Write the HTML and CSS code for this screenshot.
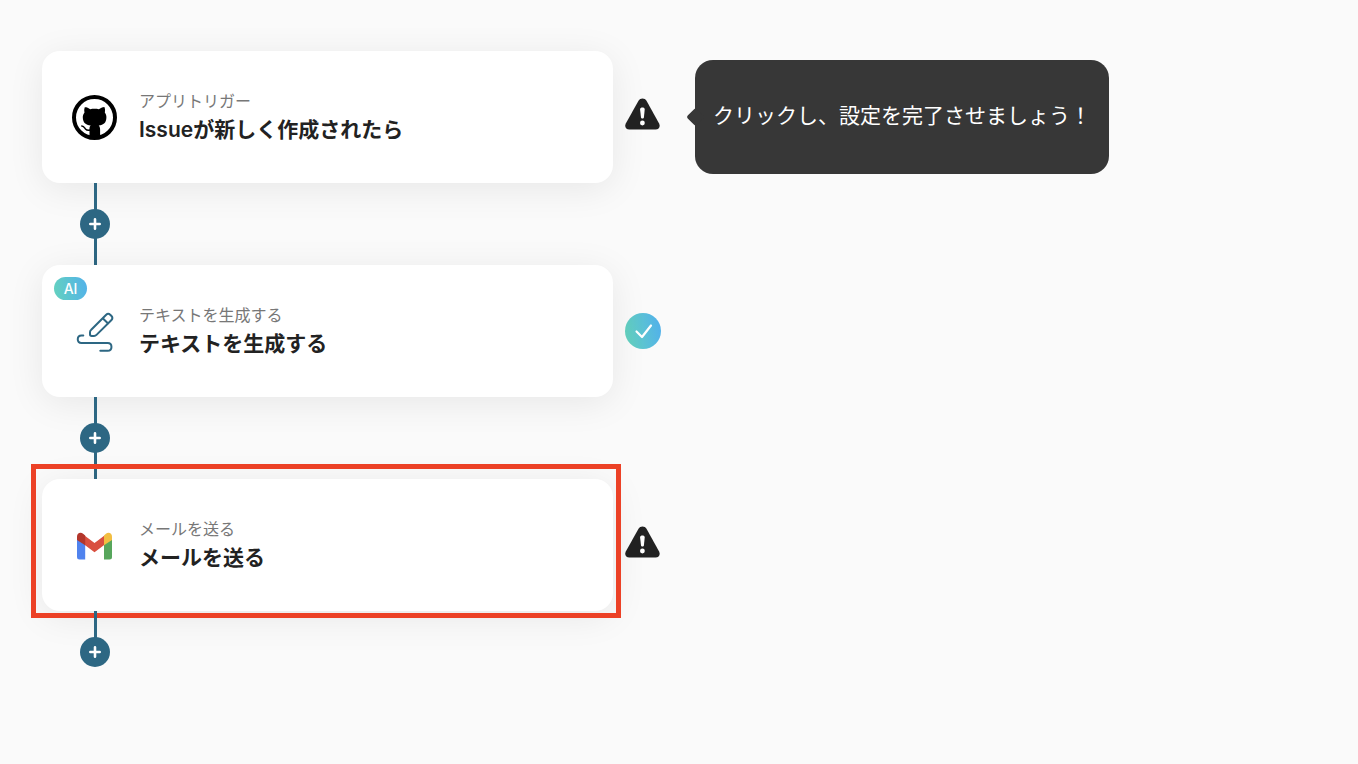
FILE: index.html
```html
<!DOCTYPE html>
<html lang="ja">
<head>
<meta charset="utf-8">
<meta name="viewport" content="width=device-width, initial-scale=1">
<title>フロー</title>
<link rel="stylesheet" href="styles.css">
</head>
<body>
<svg class="defs" aria-hidden="true">
  <defs>
    <linearGradient id="done" x1="0" x2="1" y1="0.6" y2="0.4"><stop offset="0" stop-color="#64d2be"/><stop offset="1" stop-color="#52b1ea"/></linearGradient>
    <symbol id="warning" viewBox="0 0 36 32">
      <path d="M17.500 0.500c1.700 0 3 .7 4 2.300L34.100 25.500c1.500 3.200-.1 6-3.600 6H4.300c-3.400 0-5-2.800-3.500-6L13.500 2.800c1-1.600 2.300-2.300 4-2.300z" fill="#222"/>
      <path d="M15.100 11.500c0-1.400 1-2 2.300-2s2.300.6 2.300 2l-.8 8c-.2 1.400-2.700 1.400-2.900 0z" fill="#fff"/>
      <circle cx="17.400" cy="25" r="2.400" fill="#fff"/>
    </symbol>
    <symbol id="plus" viewBox="0 0 14 14"><path d="M7 1.500v11M1.500 7h11" stroke="#fff" stroke-width="3" stroke-linecap="round"/></symbol>
  </defs>
</svg>
<main class="flow">
  <section class="step">
    <article class="card">
      <svg class="app-icon" viewBox="0 0 45 45" role="img" aria-label="GitHub">
        <circle cx="22.500" cy="22.500" r="20.500" fill="#fff" stroke="#000" stroke-width="4"/>
        <path d="M12.700 12c2.200.1 4 1.100 5.500 2.200 2.700-.6 6-.6 8.700 0 1.600-1.100 3.400-2.100 5.500-2.200.8 1.900.8 3.800.4 5.400 1.200 1.500 1.700 3.200 1.600 5.200-.1 5.200-2.700 7.500-7.700 8 1 .9 1.400 2.200 1.400 3.900v8.500H17.500v-10c.2-1.100.5-1.700 1.200-2.400-5-.5-7.800-2.900-7.900-8-.1-2 .5-3.700 1.700-5.200-.4-1.700-.4-3.500.4-5.400z"/>
        <path d="M9.800 31c2.200.1 2.600 1.600 3.700 3 1.100 1.300 2.700 1.500 4.600 1.100" fill="none" stroke="#000" stroke-width="1.500" stroke-linecap="round"/>
      </svg>
      <div class="copy"><p class="kind">アプリトリガー</p><h2 class="name">Issueが新しく作成されたら</h2></div>
    </article>
    <svg class="state warning" role="img" aria-label="要設定"><use href="#warning"/></svg>
    <p class="hint" role="status">クリックし、設定を完了させましょう！</p>
  </section>
  <div class="connector"><button class="add" type="button" aria-label="ステップを追加"><svg><use href="#plus"/></svg></button></div>
  <section class="step">
    <article class="card">
      <span class="badge">AI</span>
      <svg class="app-icon" viewBox="0 0 45 45" fill="none" stroke="#2d6783" stroke-width="2" stroke-linecap="round" stroke-linejoin="round" aria-hidden="true">
        <path d="M19.200 20.700 34.200 5.700c1.200-1.200 2.800-1.200 4 0l1.300 1.300c1.200 1.200 1.200 2.800 0 4L24.500 25.900q-1 1-2.500 1h-2.300q-1.700 0-1.700-1.700v-2q0-1.500 1.200-2.500zM30.700 9.200l5.400 5.300"/>
        <path d="M11.300 26.600H9.500c-5 0-5 7.500 0 7.500h26.200c5 0 5 7.600 0 7.600H28.300"/>
      </svg>
      <div class="copy"><p class="kind">テキストを生成する</p><h2 class="name">テキストを生成する</h2></div>
    </article>
    <svg class="state done" viewBox="0 0 36 36" role="img" aria-label="完了"><circle cx="18" cy="18" r="18" fill="url(#done)"/><path d="M11.500 18.500 17 24l9-11.500" fill="none" stroke="#fff" stroke-width="2.200" stroke-linecap="round" stroke-linejoin="round"/></svg>
  </section>
  <div class="connector"><button class="add" type="button" aria-label="ステップを追加"><svg><use href="#plus"/></svg></button></div>
  <section class="step">
    <article class="card selected">
      <svg class="app-icon" viewBox="0 0 45 45" role="img" aria-label="Gmail">
        <path d="M5 14h8.200v22.500H7.500Q5 36.500 5 34z" fill="#5083ee"/>
        <path d="M32 14h8v20q0 2.500-2.500 2.500H32z" fill="#57a65c"/>
        <path d="M12.500 12.400 22.500 20 32.500 12.400v9.300l-10 7.500-10-7.500z" fill="#d95040"/>
        <path d="M5 17v-3.300C5 9.800 8.800 8.800 11.400 11l1.800 1.400v9.800z" fill="#b3362b"/>
        <path d="M40 17v-3.300c0-3.900-3.800-4.900-6.400-2.700L32 12.400v9.800z" fill="#f2be42"/>
      </svg>
      <div class="copy"><p class="kind">メールを送る</p><h2 class="name">メールを送る</h2></div>
    </article>
    <svg class="state warning" role="img" aria-label="要設定"><use href="#warning"/></svg>
  </section>
  <div class="connector last"><button class="add" type="button" aria-label="ステップを追加"><svg><use href="#plus"/></svg></button></div>
</main>
</body>
</html>
```

FILE: styles.css
```css
* { box-sizing: border-box; }
body {
  margin: 0;
  background: #fafafa;
  color: #222;
  font-family: Inter, "Noto Sans CJK JP", sans-serif;
}
h2, p { margin: 0; }
.defs { position: absolute; width: 0; height: 0; }
.flow { padding: 51px 42px; }
.step {
  display: grid;
  grid-template-columns: minmax(300px, 571px) 36px auto;
  justify-content: start;
  align-items: center;
  column-gap: 12px;
}
.card {
  position: relative;
  display: flex;
  align-items: center;
  gap: 22px;
  min-height: 132px;
  padding: 30px;
  border-radius: 18px;
  background: #fff;
  box-shadow: 0 6px 36px rgba(0, 0, 0, 0.08);
}
.app-icon { flex: none; width: 45px; height: 45px; }
.copy { min-width: 0; padding-bottom: 3px; }
.kind { color: #777; font-size: 16px; line-height: 28px; }
.name { font-size: 21px; font-weight: 600; line-height: 30px; }
.badge {
  position: absolute;
  top: 12px;
  left: 12px;
  width: 33px;
  border-radius: 12px;
  background: linear-gradient(80deg, #64d2be, #52b1ea);
  color: #fff;
  font-size: 14px;
  font-weight: 500;
  line-height: 23px;
  text-align: center;
}
.selected::after {
  content: "";
  position: absolute;
  inset: -15px -8px -7px -11px;
  border: 5px solid #ec4126;
  pointer-events: none;
}
.state { width: 36px; height: 36px; }
.warning { height: 32px; margin-bottom: 6px; }
.hint {
  position: relative;
  margin-left: 22px;
  padding: 41px 18px 43px;
  border-radius: 18px;
  background: #373737;
  color: #fff;
  font-size: 21px;
  line-height: 30px;
}
.hint::before {
  content: "";
  position: absolute;
  top: 50%;
  left: -6px;
  width: 13px;
  height: 13px;
  border-radius: 2px;
  background: #373737;
  transform: translateY(-50%) rotate(45deg);
}
.connector {
  position: relative;
  display: flex;
  justify-content: center;
  width: 30px;
  height: 82px;
  margin-left: 38px;
  padding-top: 26px;
  background: linear-gradient(#2d6783, #2d6783) 14px 0 / 3px 100% no-repeat;
}
.last { height: 56px; background-size: 3px 40px; }
.add {
  display: grid;
  place-items: center;
  width: 30px;
  height: 30px;
  padding: 0;
  border: 0;
  border-radius: 50%;
  background: #2d6783;
  cursor: pointer;
}
.add svg { width: 12px; height: 12px; }
```
